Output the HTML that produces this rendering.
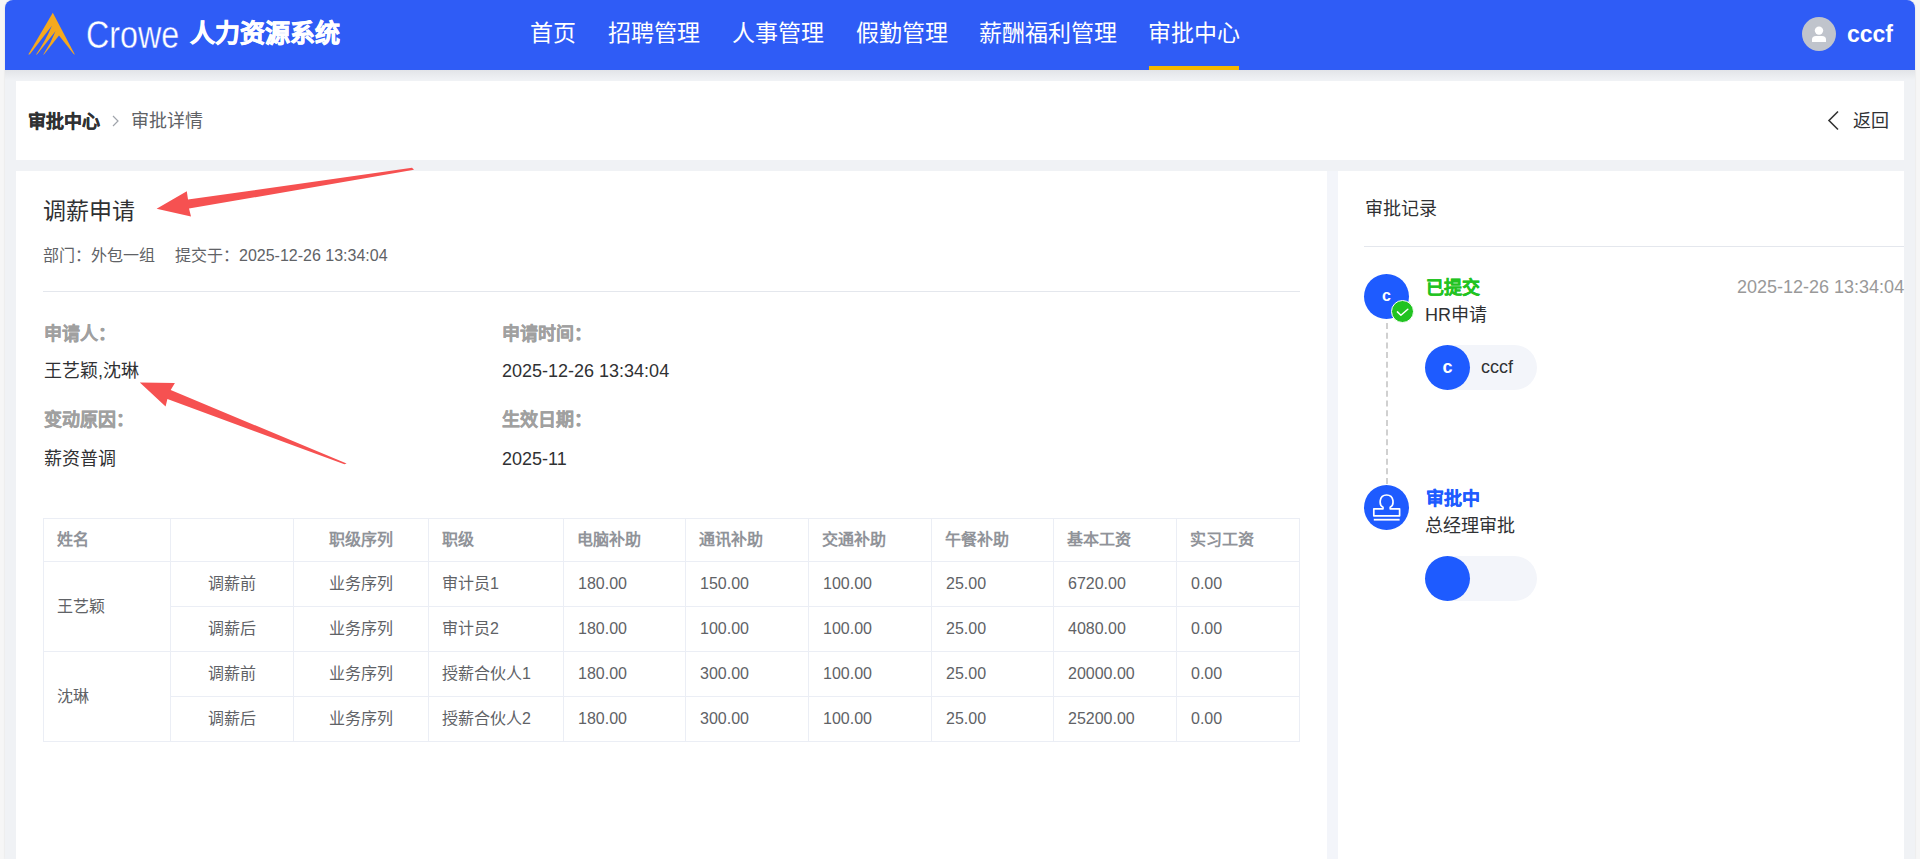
<!DOCTYPE html>
<html lang="zh-CN"><head><meta charset="utf-8">
<style>
*{box-sizing:border-box;margin:0;padding:0}
html,body{width:1920px;height:859px;overflow:hidden;background:#f6f6f6;font-family:"Liberation Sans",sans-serif;}
.abs{position:absolute}
.app{position:absolute;left:5px;top:0;width:1910px;height:859px;background:#f0f2f5;border-radius:8px 8px 0 0;box-shadow:0 0 2px rgba(0,0,0,.12)}
.hdr{position:absolute;left:5px;top:0;width:1910px;height:70px;background:#2f5cf6;border-radius:8px 8px 0 0}
.hshadow{position:absolute;left:5px;top:70px;width:1910px;height:10px;background:linear-gradient(#e2e4e8,#f0f2f5)}
.t{position:absolute;white-space:nowrap;line-height:1}
.nav{color:#fff;font-size:23px;top:22px}
.card{position:absolute;background:#fff}
.gap{position:absolute;left:1327px;top:171px;width:11px;height:688px;background:#f3f5fa}
table{position:absolute;border-collapse:collapse;left:43px;top:518px;table-layout:fixed}
td{border:1px solid #ebeef5;font-size:16px;color:#606266;padding:0 0 0 14px;white-space:nowrap;height:45px}
tr.h td{height:43px;color:#909399;font-weight:bold}
td.c{text-align:center;padding:0}
.z{position:relative;top:-2px;left:-1px}
td.c .z{left:0}
</style></head><body>
<div class="app"></div>
<div class="hdr"></div>
<div class="hshadow"></div>

<!-- logo -->
<svg class="abs" style="left:0;top:0" width="90" height="70" viewBox="0 0 90 70">
  <polygon points="28.3,54.6 52.8,12.8 74.8,54.6" fill="#f5a91e"/>
  <path d="M51.9,25.8 L29.3,55 L29.3,56 L35.7,56 L35.7,55 Q45,42 51.9,25.8 Z" fill="#2f5cf6"/>
  <path d="M55.5,31.2 L36.6,55 L36.6,56 L43,56 L43,55 Q51,43 55.5,31.2 Z" fill="#2f5cf6"/>
  <polygon points="43.6,55 59,35.5 74.4,55 74.4,56 43.6,56" fill="#2f5cf6"/>
</svg>
<div class="t" style="left:86px;top:16px;font-size:38px;color:#fff;transform:scaleX(0.85);transform-origin:0 0;-webkit-text-stroke:0.4px #2f5cf6">Crowe</div>
<div class="t" style="left:190px;top:21px;font-size:25px;color:#fff;font-weight:bold;-webkit-text-stroke:0.7px #fff">人力资源系统</div>

<div class="t nav" style="left:530px">首页</div>
<div class="t nav" style="left:608px">招聘管理</div>
<div class="t nav" style="left:732px">人事管理</div>
<div class="t nav" style="left:856px">假勤管理</div>
<div class="t nav" style="left:979px">薪酬福利管理</div>
<div class="t nav" style="left:1148px">审批中心</div>
<div class="abs" style="left:1149px;top:66px;width:90px;height:4px;background:#f5b800"></div>

<!-- user -->
<div class="abs" style="left:1802px;top:17px;width:34px;height:34px;border-radius:50%;background:#c0c4cc"></div>
<svg class="abs" style="left:1802px;top:17px" width="34" height="34" viewBox="0 0 34 34">
  <circle cx="17" cy="13.6" r="4.2" fill="#fff"/>
  <path d="M10 25 L10 22.5 Q10 19 14 19 L20 19 Q24 19 24 22.5 L24 25 Z" fill="#fff"/>
</svg>
<div class="t" style="left:1847px;top:22.5px;font-size:23px;color:#fff;font-weight:bold">cccf</div>

<!-- breadcrumb -->
<div class="card" style="left:16px;top:81px;width:1888px;height:79px"></div>
<div class="t" style="left:28px;top:112.5px;font-size:18px;color:#303133;font-weight:bold;-webkit-text-stroke:0.3px #303133">审批中心</div>
<svg class="abs" style="left:110px;top:112px" width="12" height="18" viewBox="0 0 12 18"><path d="M3 4 L8 9 L3 14" fill="none" stroke="#a0a4ab" stroke-width="1.2"/></svg>
<div class="t" style="left:131px;top:112px;font-size:18px;color:#606266">审批详情</div>
<svg class="abs" style="left:1824px;top:108px" width="20" height="24" viewBox="0 0 20 24"><path d="M14 3.5 L5 12.5 L14 21.5" fill="none" stroke="#333" stroke-width="1.6"/></svg>
<div class="t" style="left:1853px;top:112px;font-size:18px;color:#303133">返回</div>

<!-- main card -->
<div class="card" style="left:16px;top:171px;width:1311px;height:688px"></div>
<div class="gap"></div>
<div class="card" style="left:1338px;top:171px;width:566px;height:688px"></div>

<div class="t" style="left:43px;top:200px;font-size:23px;color:#303133">调薪申请</div>
<div class="t" style="left:43px;top:247.5px;font-size:16px;color:#606266">部门：外包一组</div>
<div class="t" style="left:175px;top:247.5px;font-size:16px;color:#606266">提交于：2025-12-26 13:34:04</div>
<div class="abs" style="left:43px;top:291px;width:1257px;height:1px;background:#e4e7ed"></div>

<div class="t" style="left:44px;top:325px;font-size:18px;color:#a0a0a0;font-weight:bold;-webkit-text-stroke:0.3px #a0a0a0">申请人：</div>
<div class="t" style="left:44px;top:362px;font-size:18px;color:#303133">王艺颖,沈琳</div>
<div class="t" style="left:44px;top:411px;font-size:18px;color:#a0a0a0;font-weight:bold;-webkit-text-stroke:0.3px #a0a0a0">变动原因：</div>
<div class="t" style="left:44px;top:450px;font-size:18px;color:#303133">薪资普调</div>
<div class="t" style="left:502px;top:325px;font-size:18px;color:#a0a0a0;font-weight:bold;-webkit-text-stroke:0.3px #a0a0a0">申请时间：</div>
<div class="t" style="left:502px;top:362px;font-size:18px;color:#303133">2025-12-26 13:34:04</div>
<div class="t" style="left:502px;top:411px;font-size:18px;color:#a0a0a0;font-weight:bold;-webkit-text-stroke:0.3px #a0a0a0">生效日期：</div>
<div class="t" style="left:502px;top:450px;font-size:18px;color:#303133">2025-11</div>

<table>
<colgroup><col style="width:127px"><col style="width:123px"><col style="width:135px"><col style="width:135px"><col style="width:122px"><col style="width:123px"><col style="width:123px"><col style="width:122px"><col style="width:123px"><col style="width:123px"></colgroup>
<tr class="h"><td><span class="z">姓名</span></td><td></td><td class="c"><span class="z">职级序列</span></td><td><span class="z">职级</span></td><td><span class="z">电脑补助</span></td><td><span class="z">通讯补助</span></td><td><span class="z">交通补助</span></td><td><span class="z">午餐补助</span></td><td><span class="z">基本工资</span></td><td><span class="z">实习工资</span></td></tr>
<tr><td rowspan="2"><span class="z">王艺颖</span></td><td class="c"><span class="z">调薪前</span></td><td class="c"><span class="z">业务序列</span></td><td><span class="z">审计员1</span></td><td>180.00</td><td>150.00</td><td>100.00</td><td>25.00</td><td>6720.00</td><td>0.00</td></tr>
<tr><td class="c"><span class="z">调薪后</span></td><td class="c"><span class="z">业务序列</span></td><td><span class="z">审计员2</span></td><td>180.00</td><td>100.00</td><td>100.00</td><td>25.00</td><td>4080.00</td><td>0.00</td></tr>
<tr><td rowspan="2"><span class="z">沈琳</span></td><td class="c"><span class="z">调薪前</span></td><td class="c"><span class="z">业务序列</span></td><td><span class="z">授薪合伙人1</span></td><td>180.00</td><td>300.00</td><td>100.00</td><td>25.00</td><td>20000.00</td><td>0.00</td></tr>
<tr><td class="c"><span class="z">调薪后</span></td><td class="c"><span class="z">业务序列</span></td><td><span class="z">授薪合伙人2</span></td><td>180.00</td><td>300.00</td><td>100.00</td><td>25.00</td><td>25200.00</td><td>0.00</td></tr>
</table>

<!-- right panel -->
<div class="t" style="left:1365px;top:199.5px;font-size:18px;color:#303133">审批记录</div>
<div class="abs" style="left:1364px;top:246px;width:540px;height:1px;background:#e4e7ed"></div>

<div class="abs" style="left:1364px;top:274px;width:45px;height:45px;border-radius:50%;background:#1e5bff"></div>
<div class="t" style="left:1364px;top:287.5px;width:45px;text-align:center;font-size:16px;color:#fff;font-weight:bold">c</div>
<div class="abs" style="left:1391px;top:300px;width:23px;height:23px;border-radius:50%;background:#21c321;border:1.5px solid #fff"></div>
<svg class="abs" style="left:1391px;top:300px" width="23" height="23" viewBox="0 0 23 23"><path d="M6.4 11.9 L9.9 15.2 L16.8 9.3" fill="none" stroke="#fff" stroke-width="1.5" stroke-linecap="round" stroke-linejoin="round"/></svg>
<div class="t" style="left:1426px;top:279px;font-size:18px;color:#21c321;font-weight:bold;-webkit-text-stroke:0.3px #21c321">已提交</div>
<div class="t" style="left:1425px;top:306px;font-size:18px;color:#303133">HR申请</div>
<div class="t" style="left:1737px;top:278px;font-size:18px;color:#999">2025-12-26 13:34:04</div>

<div class="abs" style="left:1386px;top:323px;width:0;height:161px;border-left:2px dashed #d0d0d0"></div>

<div class="abs" style="left:1425px;top:345px;width:112px;height:45px;border-radius:23px;background:#f3f5fa"></div>
<div class="abs" style="left:1425px;top:345px;width:45px;height:45px;border-radius:50%;background:#1e5bff"></div>
<div class="t" style="left:1425px;top:357.5px;width:45px;text-align:center;font-size:18px;color:#fff;font-weight:bold">c</div>
<div class="t" style="left:1481px;top:358px;font-size:18px;color:#303133">cccf</div>

<div class="abs" style="left:1364px;top:485px;width:45px;height:45px;border-radius:50%;background:#1e5bff"></div>
<svg class="abs" style="left:1364px;top:485px" width="45" height="45" viewBox="0 0 45 45">
  <path d="M19 23.8 L19 22.2 C15 20.4 14.6 10 22.6 10 C30.6 10 30.2 20.4 26.2 22.2 L26.2 23.8 L35.6 23.8 L35.6 30.8 L9.8 30.8 L9.8 23.8 Z" fill="none" stroke="#fff" stroke-width="1.7" stroke-linejoin="round"/>
  <path d="M9.8 34.7 L35.6 34.7" stroke="#fff" stroke-width="1.8"/>
</svg>
<div class="t" style="left:1426px;top:490px;font-size:18px;color:#1e5bff;font-weight:bold;-webkit-text-stroke:0.3px #1e5bff">审批中</div>
<div class="t" style="left:1425px;top:517px;font-size:18px;color:#303133">总经理审批</div>
<div class="abs" style="left:1425px;top:556px;width:112px;height:45px;border-radius:23px;background:#f3f5fa"></div>
<div class="abs" style="left:1425px;top:556px;width:45px;height:45px;border-radius:50%;background:#1e5bff"></div>

<!-- annotations -->
<svg class="abs" style="left:0;top:0;pointer-events:none" width="1920" height="859">
  <polygon points="156.6,208.8 186.8,191.3 188,199.6 412,167.8 414,169.8 189,208.6 191,216.6" fill="#f65151"/>
  <polygon points="139.8,382.6 174.9,382.9 170.7,390.1 346.6,463.5 344.4,464.2 167.4,399 165.6,406.5" fill="#f65151"/>
</svg>
</body></html>
